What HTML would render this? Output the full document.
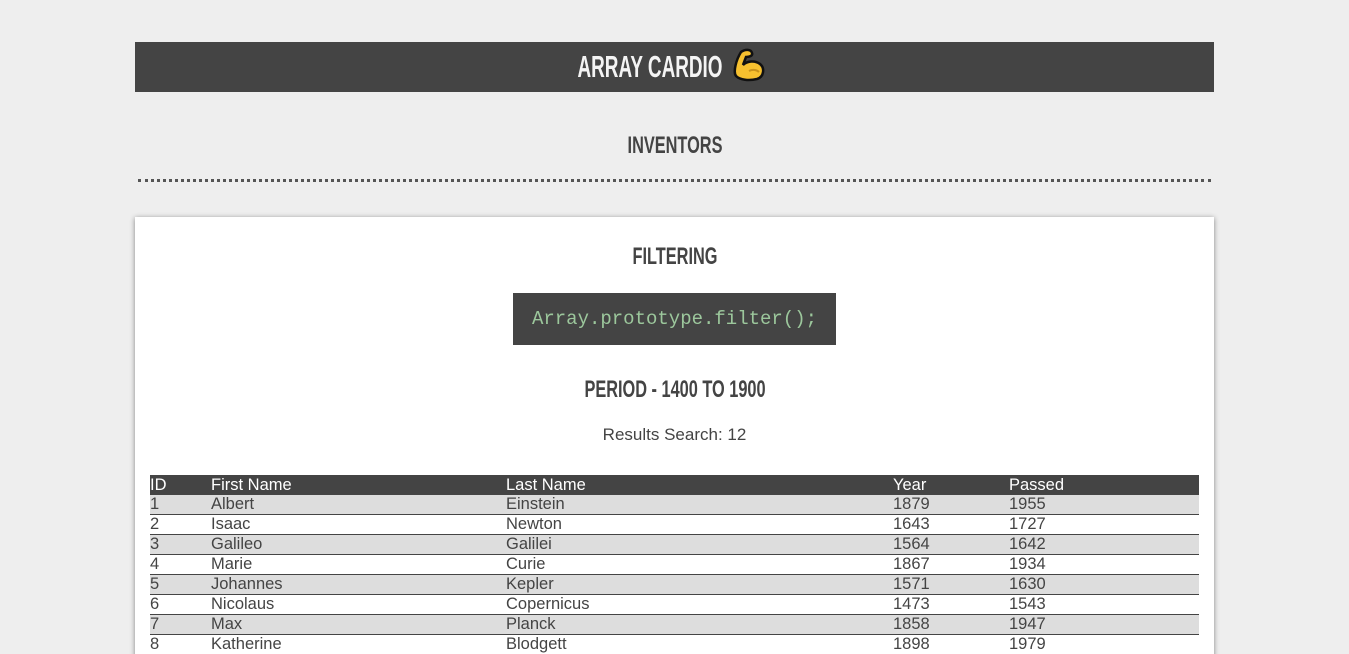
<!DOCTYPE html>
<html><head><meta charset="utf-8"><style>
html,body{margin:0;width:1349px;height:654px;overflow:hidden}
body{background:#eee;font-family:"Liberation Sans",sans-serif;color:#444;position:relative}
.hdr{position:absolute;left:135px;top:42px;width:1079px;height:50px;background:#444;color:#f4f4f4}
.c{position:absolute;font-family:"Liberation Sans Narrow","Liberation Sans",sans-serif;font-weight:bold;transform:translateX(-50%) scaleX(.68);white-space:nowrap}
.dots{position:absolute;left:138px;top:179px;width:1073px;border-top:3px dotted #555}
.card{position:absolute;left:135px;top:217px;width:1079px;height:460px;background:#fff;box-shadow:0 1px 5px rgba(0,0,0,.45)}
.code{position:absolute;left:378px;top:76px;width:323px;height:52px;background:#444;color:#9cc79c;font-family:"Liberation Mono",monospace;font-size:19px;line-height:52px;text-align:center}
table{position:absolute;left:15px;top:258px;width:1049px;border-collapse:collapse;font-size:16.5px}
td,th{padding:0;height:19px;line-height:19px;text-align:left;border-bottom:1px solid #444}
th{background:#444;color:#fff;font-weight:normal;height:20px;border:0}
tr.g td{background:#ddd}
</style></head><body>
<div class="hdr"><span class="c" style="left:515px;top:7px;font-size:31px;transform:translateX(-50%) scaleX(.61)">ARRAY CARDIO</span><svg width="38" height="36" viewBox="0 0 38 36" style="position:absolute;left:596px;top:6px"><path d="M10 4c4-3 10-3 11 1 1 3-3 4-6 4l-3 8c4-4 12-5 17-1 5 4 4 13-3 15-8 2-17 1-21-3-3-4 0-16 5-24z" fill="#f6c02f" stroke="#111" stroke-width="2.5"/><path d="M18 23c4-2 8-1 10 1" stroke="#c8921b" stroke-width="2" fill="none"/></svg></div>
<span class="c" style="left:675px;top:132px;font-size:24px">INVENTORS</span>
<div class="dots"></div>
<div class="card">
<span class="c" style="left:540px;top:26px;font-size:24px">FILTERING</span>
<div class="code">Array.prototype.filter();</div>
<span class="c" style="left:540px;top:159px;font-size:24px">PERIOD - 1400 TO 1900</span>
<div style="position:absolute;left:0;width:1079px;top:208px;font-size:17px;text-align:center">Results Search: 12</div>
<table>
<tr><th style="width:61px">ID</th><th style="width:295px">First Name</th><th style="width:387px">Last Name</th><th style="width:116px">Year</th><th>Passed</th></tr>
<tr class="g"><td>1</td><td>Albert</td><td>Einstein</td><td>1879</td><td>1955</td></tr>
<tr><td>2</td><td>Isaac</td><td>Newton</td><td>1643</td><td>1727</td></tr>
<tr class="g"><td>3</td><td>Galileo</td><td>Galilei</td><td>1564</td><td>1642</td></tr>
<tr><td>4</td><td>Marie</td><td>Curie</td><td>1867</td><td>1934</td></tr>
<tr class="g"><td>5</td><td>Johannes</td><td>Kepler</td><td>1571</td><td>1630</td></tr>
<tr><td>6</td><td>Nicolaus</td><td>Copernicus</td><td>1473</td><td>1543</td></tr>
<tr class="g"><td>7</td><td>Max</td><td>Planck</td><td>1858</td><td>1947</td></tr>
<tr><td>8</td><td>Katherine</td><td>Blodgett</td><td>1898</td><td>1979</td></tr>
</table>
</div>
</body></html>
